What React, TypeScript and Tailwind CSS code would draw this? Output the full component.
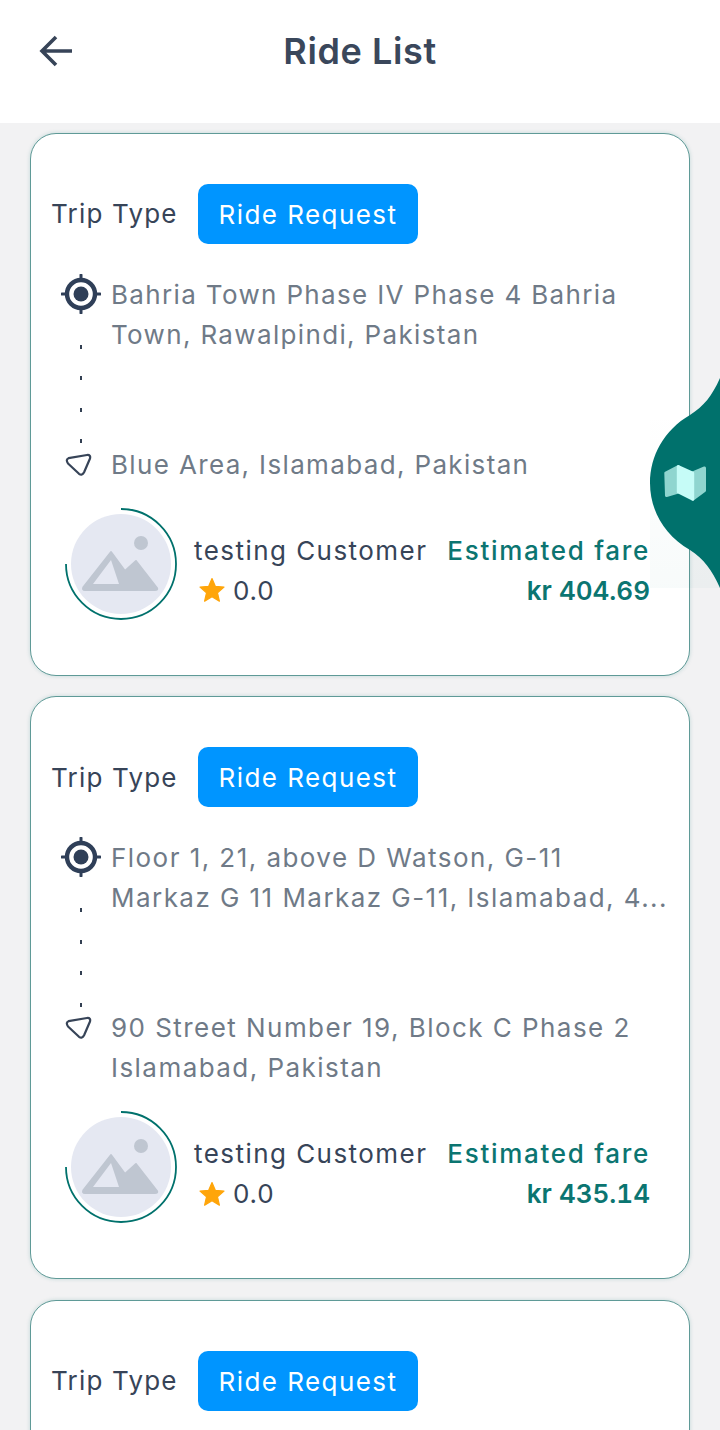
const ink = 'text-[#374458]';

function OriginIcon() {
  return (
    <svg width="40" height="40" viewBox="0 0 40 40" fill="none">
      <circle cx="20" cy="20" r="14" stroke="#2f3f58" strokeWidth="4.4" />
      <circle cx="20" cy="20" r="7.5" fill="#2f3f58" />
      <path d="M20 1v5M20 34v5M1 20h5M34 20h5" stroke="#2f3f58" strokeWidth="3" strokeLinecap="round" />
    </svg>
  );
}

function DestIcon() {
  return (
    <svg width="30" height="24" viewBox="0 0 30 24" fill="none" className="mr-[6px]">
      <path
        d="M5.5 6.2 L24 3 Q28 2.6 27 6.5 L21.2 20 Q19.2 24 16 21.8 L5 11.5 Q2.4 7.4 5.5 6.2 Z"
        stroke="#374458"
        strokeWidth="2.2"
        strokeLinejoin="round"
      />
    </svg>
  );
}

function Avatar() {
  return (
    <div className="relative w-[112px] h-[112px] shrink-0">
      <svg width="112" height="112" viewBox="0 0 112 112" fill="none" className="absolute inset-0">
        <path d="M56 1 A55 55 0 1 1 1 56" stroke="#00716c" strokeWidth="1.8" />
        <circle cx="56" cy="56" r="50" fill="#e5e8f2" />
        <circle cx="76" cy="35" r="7" fill="#bfc6d1" />
        <path
          d="M46 44 L60 63 L71 53 L92 80 Q93 82 90 82 L20 82 Q17 82 18.5 79 Z"
          fill="#bfc6d1"
          stroke="#bfc6d1"
          strokeWidth="2"
          strokeLinejoin="round"
        />
        <path d="M46 52 L28 76 L54 76 Z" fill="#e5e8f2" />
      </svg>
    </div>
  );
}

function Star() {
  return (
    <svg width="28" height="28" viewBox="0 0 28 28">
      <path
        d="M14 2.5 L17.4 10.4 L26 11.1 L19.5 16.8 L21.4 25.2 L14 20.8 L6.6 25.2 L8.5 16.8 L2 11.1 L10.6 10.4 Z"
        fill="#ffa50a"
        stroke="#ffa50a"
        strokeWidth="1.2"
        strokeLinejoin="round"
      />
    </svg>
  );
}

interface RideCardProps {
  origin: string;
  dest: string;
  fare: string;
  addressTracking?: string;
}

function RideCard({ origin, dest, fare, addressTracking = 'tracking-[1.35px]' }: RideCardProps) {
  return (
    <div className="bg-white border border-[#5f9a97] rounded-[26px] pt-[50px] pb-[55px] shadow-[0_0_4px_rgba(0,113,108,0.2)]">
      <div className="flex items-center pl-[20px] gap-[21px]">
        <span className={`w-[126px] pt-px whitespace-nowrap text-[26px] tracking-[1.2px] leading-10 ${ink}`}>Trip Type</span>
        <span className="h-[60px] w-[220px] pt-px flex items-center justify-center rounded-[10px] bg-[#0095ff] text-white text-[26px] tracking-[1.45px]">
          Ride Request
        </span>
      </div>

      <div className="mt-[30px] pl-[30px] pr-[20px]">
        <div className="flex gap-[10px] h-[170px]">
          <div className="w-10 flex flex-col items-center shrink-0">
            <OriginIcon />
            <div className="mt-[31px] flex flex-col gap-[27.5px]">
              <span className="block w-[2px] h-1 bg-[#323f52]" />
              <span className="block w-[2px] h-1 bg-[#323f52]" />
              <span className="block w-[2px] h-1 bg-[#323f52]" />
              <span className="block w-[2px] h-1 bg-[#323f52]" />
            </div>
          </div>
          <p className={`pt-px text-[26px] ${addressTracking} leading-10 text-[#6f7a87] whitespace-pre`}>{origin}</p>
        </div>
        <div className="flex gap-[10px]">
          <div className="w-10 h-10 flex items-center justify-center shrink-0">
            <DestIcon />
          </div>
          <p className={`pt-px text-[26px] ${addressTracking} leading-10 text-[#6f7a87] whitespace-pre`}>{dest}</p>
        </div>
      </div>

      <div className="mt-[23px] pl-[34px] pr-[39px] flex items-start">
        <Avatar />
        <div className="ml-[17px] mt-[23px] flex-1 flex justify-between">
          <div>
            <div className={`text-[26px] tracking-[1.45px] leading-10 ${ink}`}>testing Customer</div>
            <div className="flex items-center gap-[7px] pl-[4px] h-[39px]">
              <Star />
              <span className={`text-[26px] tracking-[0.85px] ${ink}`}>0.0</span>
            </div>
          </div>
          <div className="text-right text-[#0b7571] font-medium">
            <div className="text-[26px] tracking-[1.7px] leading-10 whitespace-nowrap">Estimated fare</div>
            <div className="text-[26px] leading-10 font-semibold tabular-nums">{fare}</div>
          </div>
        </div>
      </div>
    </div>
  );
}

function MapTab() {
  return (
    <svg
      width="70"
      height="210"
      viewBox="0 0 70 210"
      className="absolute right-0 top-[378px]"
    >
      <defs>
        <linearGradient id="tabGlow" x1="0" y1="0" x2="0" y2="1">
          <stop offset="0" stopColor="#00716c" stopOpacity="0" />
          <stop offset="1" stopColor="#00716c" stopOpacity="0.03" />
        </linearGradient>
      </defs>
      <rect x="0" y="30" width="70" height="180" fill="url(#tabGlow)" />
      <path
        d="M70 0 C62 18 54 28 40 37 C14 52 0 78 0 105 C0 132 14 157 40 172 C54 181 62 192 70 210 Z"
        fill="#00716c"
      />
      <g strokeWidth="3" strokeLinejoin="round">
        <path d="M15.8 95 L28.3 88.5 V114 L16.5 117.5 Z" fill="#8fd5cf" stroke="#8fd5cf" />
        <path d="M42.7 95 L54.5 90 V112.5 L42.7 121.2 Z" fill="#8fd5cf" stroke="#8fd5cf" />
      </g>
      <path d="M28.3 88.5 L42.7 95 V121.2 L28.3 114 Z" fill="#c6fcf7" stroke="#c6fcf7" strokeWidth="3" strokeLinejoin="round" />
    </svg>
  );
}

export default function App() {
  return (
    <div className="relative h-[1430px] overflow-hidden bg-[#f2f2f3] font-['Inter',sans-serif]">
      <header className="h-[123px] bg-white flex items-center justify-center relative">
        <svg
          width="36"
          height="36"
          viewBox="0 0 36 36"
          fill="none"
          className="absolute left-[39px] top-[33px]"
        >
          <path d="M33 18H3M17 4 3 18l14 14" stroke="#374458" strokeWidth="3.6" strokeLinejoin="miter" />
        </svg>
        <h1 className="text-[36px] tracking-[0.6px] font-semibold mb-[22px] text-[#3a475b]">Ride List</h1>
      </header>
      <main className="px-[30px] pt-[9.9px] flex flex-col gap-[20.5px]">
        <RideCard
          origin={'Bahria Town Phase IV Phase 4 Bahria\nTown, Rawalpindi, Pakistan'}
          dest="Blue Area, Islamabad, Pakistan"
          fare="kr 404.69"
        />
        <RideCard
          origin={'Floor 1, 21, above D Watson, G-11\nMarkaz G 11 Markaz G-11, Islamabad, 4...'}
          dest={'90 Street Number 19, Block C Phase 2\nIslamabad, Pakistan'}
          fare="kr 435.14"
          addressTracking="tracking-[1.45px]"
        />
        <RideCard
          origin={'Bahria Town Phase IV Phase 4 Bahria\nTown, Rawalpindi, Pakistan'}
          dest="Blue Area, Islamabad, Pakistan"
          fare="kr 404.69"
        />
      </main>
      <MapTab />
    </div>
  );
}
